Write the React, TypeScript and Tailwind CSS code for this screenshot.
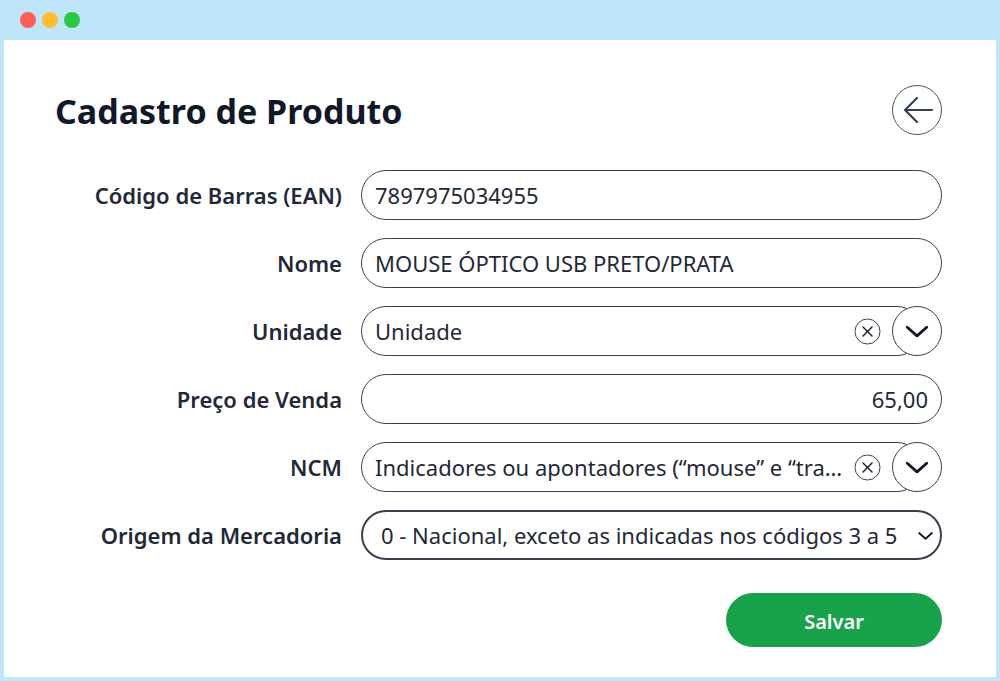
import React from "react";

type Row = { label: string; kind: "text" | "combo" | "select"; value: string; align?: "right" };

const rows: Row[] = [
  { label: "Código de Barras (EAN)", kind: "text", value: "7897975034955" },
  { label: "Nome", kind: "text", value: "MOUSE ÓPTICO USB PRETO/PRATA" },
  { label: "Unidade", kind: "combo", value: "Unidade" },
  { label: "Preço de Venda", kind: "text", value: "65,00", align: "right" },
  { label: "NCM", kind: "combo", value: "Indicadores ou apontadores (“mouse” e “trackball”)" },
  { label: "Origem da Mercadoria", kind: "select", value: "0 - Nacional, exceto as indicadas nos códigos 3 a 5" },
];

const ClearIcon = () => (
  <svg width="27" height="27" viewBox="0 0 27 27" fill="none" className="shrink-0">
    <circle cx="13.5" cy="13.5" r="12.5" stroke="#374151" strokeWidth="1" />
    <path d="M9 9l9 9M18 9l-9 9" stroke="#111827" strokeWidth="1.4" strokeLinecap="round" />
  </svg>
);

const ChevronDown = ({ size = 26, width = 2.6 }: { size?: number; width?: number }) => (
  <svg width={size} height={size} viewBox="0 0 24 24" fill="none" className="shrink-0">
    <path d="M3 8.5l9 8 9-8" stroke="#111827" strokeWidth={width} strokeLinecap="round" strokeLinejoin="round" />
  </svg>
);

const Field = ({ row }: { row: Row }) => {
  if (row.kind === "text") {
    return (
      <div
        className={`flex h-[50px] min-w-0 items-center rounded-full border border-[#374151] px-[13px] text-[22px] text-[#1f2937] ${
          row.align === "right" ? "justify-end" : ""
        }`}
      >
        {row.value}
      </div>
    );
  }
  if (row.kind === "combo") {
    return (
      <div className="relative h-[50px] min-w-0">
        <div className="mr-[20px] flex h-full items-center gap-2 rounded-full border border-[#374151] pl-[13px] pr-[40px] text-[22px] text-[#1f2937]">
          <span className="min-w-0 flex-1 truncate">{row.value}</span>
          <ClearIcon />
        </div>
        <button className="absolute right-0 top-0 flex h-[50px] w-[50px] items-center justify-center rounded-full border border-[#374151] bg-white">
          <ChevronDown />
        </button>
      </div>
    );
  }
  return (
    <div className="flex h-[50px] min-w-0 items-center gap-[18px] rounded-full border-2 border-[#374151] pl-[18px] pr-[6px] text-[22px] text-[#1f2937]">
      <span className="min-w-0 flex-1 overflow-hidden whitespace-nowrap">{row.value}</span>
      <ChevronDown size={17} width={2.6} />
    </div>
  );
};

export default function App() {
  return (
    <div className="flex h-[681px] w-[1000px] flex-col bg-[#bee5f9] px-[4px] pb-[4px] font-['Noto_Sans',sans-serif]">
      <div className="flex h-[40px] items-center gap-[6px] pl-[16px]">
        <span className="h-4 w-4 rounded-full bg-[#ff5f57]" />
        <span className="h-4 w-4 rounded-full bg-[#febc2e]" />
        <span className="h-4 w-4 rounded-full bg-[#28c840]" />
      </div>
      <div className="flex-1 bg-white pl-[51px] pr-[54px] pt-[46px]">
        <div className="flex h-[50px] items-center justify-between">
          <h1 className="text-[34px] font-bold text-[#111827]">Cadastro de Produto</h1>
          <button className="-mt-[2px] flex h-[50px] w-[50px] items-center justify-center rounded-full border border-[#4b5563]">
            <svg width="36" height="36" viewBox="0 0 36 36" fill="none">
              <path d="M33 18H6M18 6L6 18l12 12" stroke="#334155" strokeWidth="2.2" strokeLinecap="round" strokeLinejoin="round" />
            </svg>
          </button>
        </div>
        <div className="mt-[34px] grid grid-cols-[287px_minmax(0,1fr)] items-center gap-x-[19px] gap-y-[18px]">
          {rows.map((row) => (
            <React.Fragment key={row.label}>
              <label className="text-right text-[22px] font-semibold text-[#1f2937]">{row.label}</label>
              <Field row={row} />
            </React.Fragment>
          ))}
        </div>
        <div className="mt-[33px] flex justify-end">
          <button className="h-[54px] w-[216px] rounded-full bg-[#18a34a] pt-[3px] text-[20px] font-semibold text-white">
            Salvar
          </button>
        </div>
      </div>
    </div>
  );
}
